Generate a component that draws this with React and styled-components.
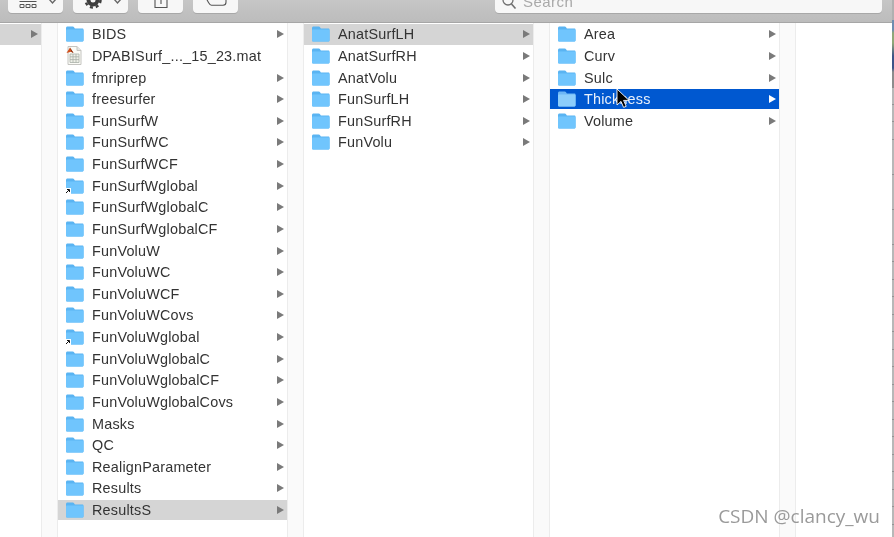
import { Fragment } from 'react'
import styled, { createGlobalStyle } from 'styled-components'

const GlobalStyle = createGlobalStyle`
  html, body { margin: 0; padding: 0; background: #fff; overflow: hidden; }
  body { font-family: "Liberation Sans", Arial, sans-serif; }
`

// the source screenshot was scaled up, so everything in it is a little soft
const Page = styled.div`
  position: relative;
  width: 894px;
  height: 537px;
  display: flex;
  overflow: hidden;
  filter: blur(0.35px);
`

const Finder = styled.div`
  flex: 1;
  display: flex;
  flex-direction: column;
  min-width: 0;
`

// strip of the next window showing behind the finder window
const EdgeStrip = styled.div`
  width: 2px;
  background:
    linear-gradient(#b0b0b0 0 20px, #6f8db0 20px 30px, #8fa878 33px 43px, #3d5488 56px 68px, #8d8d8d 72px 88px, transparent 88px),
    repeating-linear-gradient(#b8b8b8 0 16.5px, #949494 16.5px 17.5px);
`

const Toolbar = styled.div`
  height: 23px;
  flex: none;
  box-sizing: border-box;
  padding: 0 10px 9px 8px;
  display: flex;
  align-items: flex-end;
  gap: 10px;
  background: linear-gradient(#c6c6c6, #bcbcbc);
  border-bottom: 1px solid #a6a6a6;
  overflow: hidden;
`

const ToolButton = styled.div`
  flex: none;
  width: ${(p) => p.$width}px;
  height: 30px;
  box-sizing: border-box;
  padding: 0 0 5px ${(p) => (p.$menu ? 11 : 0)}px;
  display: flex;
  align-items: flex-end;
  justify-content: ${(p) => (p.$menu ? 'flex-start' : 'center')};
  gap: 10.5px;
  background: #f7f7f7;
  border-radius: 4px;
  box-shadow: 0 1px 0 #a8a8a8;
  color: #4a4a4a;
`

const Chevron = styled.svg`
  width: 9px;
  height: 8px;
  margin-bottom: 2px;
`

const SearchField = styled.div`
  flex: none;
  margin-left: auto;
  width: 387px;
  height: 30px;
  box-sizing: border-box;
  padding: 0 0 4px 7px;
  display: flex;
  align-items: flex-end;
  gap: 5px;
  background: #f7f7f7;
  border-radius: 4px;
  box-shadow: 0 1px 0 #a8a8a8;
  color: #a9a9a9;
  font-size: 15px;
  line-height: 15px;
  letter-spacing: 0.45px;
`

const Browser = styled.div`
  flex: 1;
  display: flex;
  background: #fff;
  min-height: 0;
`

const Column = styled.div`
  flex: none;
  width: ${(p) => p.$width}px;
  box-sizing: border-box;
  padding-top: 1px;
  display: flex;
  flex-direction: column;
  gap: 1.04px;
`

const Gutter = styled.div`
  flex: none;
  width: 17px;
  box-sizing: border-box;
  background: #fafafa;
  border-left: 1px solid #ececec;
  border-right: 1px solid #ececec;
`

const bgFor = { gray: '#d5d5d5', blue: '#0058d0' }

const Row = styled.div`
  position: relative;
  height: 20.6px;
  flex: none;
  box-sizing: border-box;
  padding: 0 3px 0 7px;
  display: flex;
  align-items: center;
  background: ${(p) => bgFor[p.$tone] || 'transparent'};
  color: ${(p) => (p.$tone === 'blue' ? '#e8f0fb' : '#333')};
  font-size: 14.4px;
  letter-spacing: 0.2px;
  white-space: nowrap;
`

const IconSlot = styled.span`
  position: relative;
  flex: none;
  width: 19px;
  height: 16px;
  margin-right: 8px;
  display: flex;
`

const Label = styled.span`
  flex: 1;
  min-width: 0;
`

const Arrow = styled.span`
  flex: none;
  width: 0;
  height: 0;
  border-left: 7px solid ${(p) => (p.$tone === 'blue' ? '#fff' : '#7a7a7a')};
  border-top: 4px solid transparent;
  border-bottom: 4px solid transparent;
`

const CursorMark = styled.svg`
  position: absolute;
  left: 66px;
  top: 0px;
  width: 14px;
  height: 20px;
`

const Watermark = styled.div`
  position: absolute;
  right: 14px;
  bottom: 9px;
  font-family: "Open Sans", sans-serif;
  font-size: 19px;
  line-height: 24px;
  color: #9a9a9a;
`

const FolderIcon = ({ light }) => (
  <svg width="19" height="16" viewBox="0 0 19 16">
    <path d="M1 2.2C1 1 1.6.5 2.6.5h5c.8 0 1.2.3 1.6.9l.7 1.1h7.4c.8 0 1.2.5 1.2 1.3v10.4c0 .8-.5 1.3-1.2 1.3H2.2c-.8 0-1.2-.5-1.2-1.3z" fill={light ? '#6db6f5' : '#5ab4f2'} />
    <path d="M1 4.4c0-.6.4-1 1-1h15.6c.6 0 1 .4 1 1v9.7c0 .8-.5 1.3-1.2 1.3H2.2c-.8 0-1.2-.5-1.2-1.3z" fill={light ? '#8ccdfb' : '#70c5fd'} />
  </svg>
)

const AliasBadge = () => (
  <svg width="6" height="6" viewBox="0 0 6 6" style={{ position: 'absolute', left: 0, bottom: 0 }}>
    <rect width="6" height="6" fill="#fff" />
    <path d="M1 5 4 2M2 1.5h2.5V4" stroke="#111" strokeWidth="1" fill="none" />
  </svg>
)

const MatFileIcon = () => (
  <svg width="19" height="19" viewBox="0 0 19 19" style={{ marginTop: -2 }}>
    <path d="M3 .5h9l4 4v14H3z" fill="#fbfbf6" stroke="#c4c4c0" />
    <path d="M12 .5v4h4" fill="#e6e6e2" stroke="#c4c4c0" />
    <path d="M5 8h9v8.5H5zM5 10.8h9M5 13.6h9M8 8v8.5M11 8v8.5" fill="#eef0e8" stroke="#a9b0a8" strokeWidth=".8" />
    <path d="M1.5 7 5 1.5 8.5 7 6 5.8z" fill="#d2501c" />
    <path d="M5 1.5 6.6 6 8.5 7z" fill="#7a2a10" />
  </svg>
)

const MenuChevron = () => (
  <Chevron viewBox="0 0 9 8">
    <path d="M1 1l3.5 4L8 1" fill="none" stroke="#666" strokeWidth="1.4" />
  </Chevron>
)

const col0 = [{ name: '', tone: 'gray', arrow: true }]

const col1 = [
  { name: 'BIDS', arrow: true },
  { name: 'DPABISurf_..._15_23.mat', kind: 'mat' },
  { name: 'fmriprep', arrow: true },
  { name: 'freesurfer', arrow: true },
  { name: 'FunSurfW', arrow: true },
  { name: 'FunSurfWC', arrow: true },
  { name: 'FunSurfWCF', arrow: true },
  { name: 'FunSurfWglobal', arrow: true, alias: true },
  { name: 'FunSurfWglobalC', arrow: true },
  { name: 'FunSurfWglobalCF', arrow: true },
  { name: 'FunVoluW', arrow: true },
  { name: 'FunVoluWC', arrow: true },
  { name: 'FunVoluWCF', arrow: true },
  { name: 'FunVoluWCovs', arrow: true },
  { name: 'FunVoluWglobal', arrow: true, alias: true },
  { name: 'FunVoluWglobalC', arrow: true },
  { name: 'FunVoluWglobalCF', arrow: true },
  { name: 'FunVoluWglobalCovs', arrow: true },
  { name: 'Masks', arrow: true },
  { name: 'QC', arrow: true },
  { name: 'RealignParameter', arrow: true },
  { name: 'Results', arrow: true },
  { name: 'ResultsS', arrow: true, tone: 'gray' },
]

const col2 = [
  { name: 'AnatSurfLH', arrow: true, tone: 'gray' },
  { name: 'AnatSurfRH', arrow: true },
  { name: 'AnatVolu', arrow: true },
  { name: 'FunSurfLH', arrow: true },
  { name: 'FunSurfRH', arrow: true },
  { name: 'FunVolu', arrow: true },
]

const col3 = [
  { name: 'Area', arrow: true },
  { name: 'Curv', arrow: true },
  { name: 'Sulc', arrow: true },
  { name: 'Thickness', arrow: true, tone: 'blue', cursor: true },
  { name: 'Volume', arrow: true },
]

function ListRow({ item }) {
  return (
    <Row $tone={item.tone}>
      {item.name && (
        <>
          <IconSlot>
            {item.kind === 'mat' ? <MatFileIcon /> : <FolderIcon light={item.tone === 'blue'} />}
            {item.alias && <AliasBadge />}
          </IconSlot>
          <Label>{item.name}</Label>
        </>
      )}
      {!item.name && <Label />}
      {item.arrow && <Arrow $tone={item.tone} />}
      {item.cursor && (
        <CursorMark viewBox="0 0 14 20">
          <path d="M1 0v16l4-3.6 2.6 6 2.6-1.1-2.6-5.9H13z" fill="#000" stroke="#fff" strokeWidth=".9" />
        </CursorMark>
      )}
    </Row>
  )
}

export default function App() {
  return (
    <Page>
      <GlobalStyle />
      <Finder>
        <Toolbar>
          <ToolButton $width={55} $menu>
            <svg width="18" height="9" viewBox="0 0 18 9">
              <path d="M.5 2.500h17" stroke="#555" />
              <path d="M1 5.500h4v3H1zM7 5.500h4v3H7zM13 5.500h4v3h-4z" fill="none" stroke="#555" />
            </svg>
            <MenuChevron />
          </ToolButton>
          <ToolButton $width={55} $menu>
            <svg width="18" height="10" viewBox="0 0 18 10" style={{ marginBottom: -1 }}>
              <circle cx="9" cy="1" r="6.500" fill="#3f3f3f" />
              <circle cx="9" cy="1" r="7.500" fill="none" stroke="#3f3f3f" strokeWidth="2.500" strokeDasharray="3 2.900" />
              <circle cx="9" cy="1" r="2.500" fill="#f7f7f7" />
            </svg>
            <MenuChevron />
          </ToolButton>
          <ToolButton $width={45}>
            <svg width="14" height="9" viewBox="0 0 14 9">
              <path d="M1 0v8.500h12V0M7 0v5" fill="none" stroke="#555" strokeWidth="1.100" />
            </svg>
          </ToolButton>
          <ToolButton $width={45}>
            <svg width="22" height="9" viewBox="0 0 22 9" style={{ marginBottom: 1 }}>
              <path d="M1 0l2.500 4.500c.7 1.200 1.500 2.800 3 2.800H18c1.800 0 3-1 3-3V0" fill="none" stroke="#555" strokeWidth="1.100" />
            </svg>
          </ToolButton>
          <SearchField>
            <svg width="16" height="9" viewBox="0 0 16 9">
              <circle cx="6" cy="0" r="5" fill="none" stroke="#6f6f6f" strokeWidth="1.300" />
              <path d="M9.500 4l4 4.500" stroke="#6f6f6f" strokeWidth="1.600" />
            </svg>
            <span>Search</span>
          </SearchField>
        </Toolbar>
        <Browser>
          <Column $width={41}>
            {col0.map((item, i) => <ListRow key={i} item={item} />)}
          </Column>
          <Gutter />
          {[col1, col2, col3].map((list, c) => (
            <Fragment key={c}>
              <Column $width={229}>
                {list.map((item, i) => <ListRow key={i} item={item} />)}
              </Column>
              <Gutter />
            </Fragment>
          ))}
        </Browser>
      </Finder>
      <EdgeStrip />
      <Watermark>CSDN @clancy_wu</Watermark>
    </Page>
  )
}
